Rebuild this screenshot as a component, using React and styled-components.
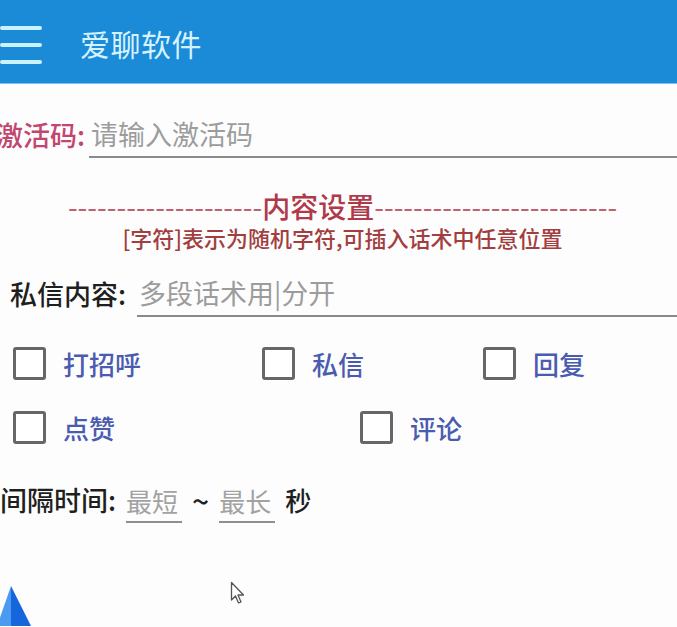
import React from "react";
import styled, { createGlobalStyle } from "styled-components";

const GlobalStyle = createGlobalStyle`
  html, body {
    margin: 0;
    padding: 0;
    background: #fdfdfd;
    overflow: hidden;
  }
  * {
    box-sizing: border-box;
  }
`;

const FONT = `"Noto Sans CJK SC", "Noto Sans", sans-serif`;

const App = () => {
  return (
    <Page>
      <GlobalStyle />
      <Header>
        <Burger>
          <span />
          <span />
          <span />
        </Burger>
        <HeaderTitle>爱聊软件</HeaderTitle>
      </Header>

      <CodeRow>
        <FieldLabel color="#c2466e" offset={-4} gap={4}>激活码:</FieldLabel>
        <LineInput placeholder="请输入激活码" />
      </CodeRow>

      <SectionTitle>
        <Dashes>{"-".repeat(20)}</Dashes>
        内容设置
        <Dashes>{"-".repeat(25)}</Dashes>
      </SectionTitle>
      <SectionHint>[字符]表示为随机字符,可插入话术中任意位置</SectionHint>

      <MessageRow>
        <FieldLabel color="#1f1f1f" offset={10} gap={11}>私信内容:</FieldLabel>
        <LineInput placeholder="多段话术用|分开" />
      </MessageRow>

      <CheckGrid columns="249px 221px 1fr" top={26}>
        <Check label="打招呼" />
        <Check label="私信" />
        <Check label="回复" />
      </CheckGrid>
      <CheckGrid columns="347px 1fr" top={24}>
        <Check label="点赞" />
        <Check label="评论" />
      </CheckGrid>

      <IntervalRow>
        <FieldLabel color="#1f1f1f" offset={0} gap={10}>间隔时间:</FieldLabel>
        <ShortInput placeholder="最短" />
        <Tilde>~</Tilde>
        <ShortInput placeholder="最长" />
        <Unit>秒</Unit>
      </IntervalRow>

      <Pyramid width="34" height="40" viewBox="0 0 34 40">
        <polygon points="11,0 -3,40 11,40" fill="#4a9af0" />
        <polygon points="11,0 11,40 31,40" fill="#1566dc" />
      </Pyramid>

      <Cursor width="16" height="24" viewBox="0 0 16 24">
        <path
          d="M1.5 1.5 L1.5 19 L5.5 15 L8.5 22 L11 21 L8 14 L13.5 14 Z"
          fill="#ffffff"
          stroke="#555"
          strokeWidth="1.3"
          strokeLinejoin="round"
        />
      </Cursor>
    </Page>
  );
};

const Check = ({ label }) => (
  <CheckItem>
    <Box />
    <CheckText>{label}</CheckText>
  </CheckItem>
);

const Page = styled.div`
  position: relative;
  width: 677px;
  height: 627px;
  overflow: hidden;
  font-family: ${FONT};
  background: #fdfdfd;
`;

const Header = styled.header`
  display: flex;
  align-items: center;
  height: 84px;
  background: #1b8ad7;
  border-bottom: 1px solid #7fc0ee;
`;

const Burger = styled.div`
  display: flex;
  flex-direction: column;
  justify-content: space-between;
  width: 42px;
  height: 38px;
  margin-top: 6px;

  span {
    display: block;
    height: 4px;
    border-radius: 2px;
    background: #c8f3ff;
  }
`;

const HeaderTitle = styled.h1`
  margin: 2px 0 0 38px;
  font-size: 30px;
  font-weight: 400;
  color: #d4f2ff;
  letter-spacing: 0.5px;
`;

const CodeRow = styled.div`
  display: flex;
  align-items: flex-end;
  margin-top: 26px;
`;

const MessageRow = styled.div`
  display: flex;
  align-items: flex-end;
  margin-top: 19px;
`;

const FieldLabel = styled.span`
  flex: none;
  margin-left: ${(p) => p.offset}px;
  margin-right: ${(p) => p.gap}px;
  font-size: 27px;
  font-weight: 500;
  line-height: 46px;
  color: ${(p) => p.color};
`;

const LineInput = styled.input`
  flex: 1;
  min-width: 0;
  height: 48px;
  padding: 0 2px;
  border: none;
  border-bottom: 2px solid #8a8a8a;
  background: transparent;
  font-family: ${FONT};
  font-size: 27px;
  color: #333;
  outline: none;

  &::placeholder {
    color: #9c9c9c;
  }
`;

const SectionTitle = styled.div`
  margin-top: 32px;
  text-align: center;
  font-size: 28px;
  line-height: 32px;
  font-weight: 500;
  color: #b03a4a;
  white-space: nowrap;
  padding-left: 8px;
`;

const Dashes = styled.span`
  font-size: 28px;
  font-weight: 400;
  color: #c06070;
`;

const SectionHint = styled.div`
  margin-top: 2px;
  text-align: center;
  font-size: 22px;
  line-height: 26px;
  font-weight: 500;
  color: #a23e40;
  padding-left: 8px;
  white-space: nowrap;
`;

const CheckGrid = styled.div`
  display: grid;
  grid-template-columns: ${(p) => p.columns};
  margin-top: ${(p) => p.top}px;
  padding-left: 13px;
`;

const CheckItem = styled.label`
  display: flex;
  align-items: center;
  height: 40px;
`;

const Box = styled.span`
  flex: none;
  width: 33px;
  height: 33px;
  border: 3px solid #676767;
  border-radius: 3px;
  background: #fff;
`;

const CheckText = styled.span`
  margin-left: 17px;
  font-size: 26px;
  font-weight: 500;
  color: #4b5cb0;
`;

const IntervalRow = styled.div`
  display: flex;
  align-items: flex-end;
  margin-top: 30px;
  height: 46px;
`;

const ShortInput = styled.input`
  width: 56px;
  height: 44px;
  padding: 0;
  border: none;
  border-bottom: 2px solid #8f8f8f;
  background: transparent;
  font-family: ${FONT};
  font-size: 26px;
  outline: none;

  &::placeholder {
    color: #a2a2a2;
  }
`;

const Tilde = styled.span`
  margin: 0 10px 0 10px;
  font-size: 30px;
  font-weight: 500;
  line-height: 46px;
  color: #222;
`;

const Unit = styled.span`
  margin-left: 10px;
  font-size: 26px;
  font-weight: 500;
  line-height: 46px;
  color: #1f1f1f;
`;

const Pyramid = styled.svg`
  display: block;
  margin-top: 63px;
`;

const Cursor = styled.svg`
  position: absolute;
  left: 230px;
  top: 581px;
`;

export default App;
